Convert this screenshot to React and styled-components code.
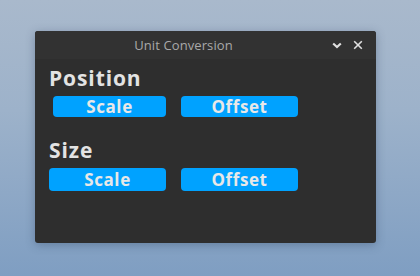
import React from "react";
import styled, { createGlobalStyle } from "styled-components";

const Global = createGlobalStyle`
  html, body { margin: 0; padding: 0; }
  body {
    width: 420px; height: 276px; overflow: hidden;
    background: linear-gradient(180deg, #a9b9cc 0%, #9db2ca 40%, #7f9ec2 100%);
    font-family: "Open Sans", "Noto Sans", sans-serif;
  }
`;

const Stage = styled.div`
  padding: 31px 0 0 35px;
`;

const Window = styled.div`
  width: 341px;
  height: 212px;
  background: #2e2e2e;
  border-radius: 3px;
  box-shadow: 0 2px 10px rgba(40, 60, 90, 0.35);
  display: flex;
  flex-direction: column;
  overflow: hidden;
`;

const TitleBar = styled.div`
  height: 28px;
  background: #323232;
  display: flex;
  align-items: center;
`;

const Title = styled.div`
  flex: 1;
  text-align: center;
  color: #a9a9a9;
  font-size: 13px;
  font-family: "Open Sans", sans-serif;
  letter-spacing: 0.1px;
`;

const Controls = styled.div`
  display: flex;
  align-items: center;
  gap: 11px;
  padding-right: 13px;
`;

const Body = styled.div`
  padding: 6px 0 0 14px;
  display: flex;
  flex-direction: column;
`;

const Label = styled.div`
  color: #e3e3e3;
  font-family: "Open Sans", sans-serif;
  font-weight: 700;
  font-size: 21px;
  line-height: 26px;
  letter-spacing: 0.9px;
  margin-top: ${(p) => p.$mt || 0}px;
`;

const Row = styled.div`
  display: flex;
  gap: 15px;
  margin-top: ${(p) => p.$mt || 4}px;
  padding-left: ${(p) => p.$indent || 0}px;
`;

const Btn = styled.div`
  width: ${(p) => p.$w}px;
  height: ${(p) => p.$h}px;
  background: #00a2ff;
  border-radius: 4px;
  color: #e8e8e8;
  font-family: "Open Sans", sans-serif;
  font-weight: 700;
  font-size: 17px;
  display: flex;
  align-items: center;
  justify-content: center;
  letter-spacing: 0.6px;
`;

const Chevron = () => (
  <svg width="10" height="7" viewBox="0 0 10 7">
    <path d="M1.2 1.5 L5 5 L8.8 1.5" stroke="#e0e0e0" strokeWidth="2.2" fill="none" />
  </svg>
);

const Close = () => (
  <svg width="10" height="10" viewBox="0 0 10 10">
    <path d="M1.2 1.2 L8.8 8.8 M8.8 1.2 L1.2 8.8" stroke="#e0e0e0" strokeWidth="1.6" fill="none" />
  </svg>
);

export default function App() {
  return (
    <>
      <Global />
      <Stage>
        <Window>
          <TitleBar>
            <Title>Unit Conversion</Title>
            <Controls>
              <Chevron />
              <Close />
            </Controls>
          </TitleBar>
          <Body>
            <Label>Position</Label>
            <Row $mt={5} $indent={4}>
              <Btn $w={113} $h={21}>Scale</Btn>
              <Btn $w={117} $h={21}>Offset</Btn>
            </Row>
            <Label $mt={20}>Size</Label>
            <Row $mt={5}>
              <Btn $w={117} $h={23}>Scale</Btn>
              <Btn $w={117} $h={23}>Offset</Btn>
            </Row>
          </Body>
        </Window>
      </Stage>
    </>
  );
}
